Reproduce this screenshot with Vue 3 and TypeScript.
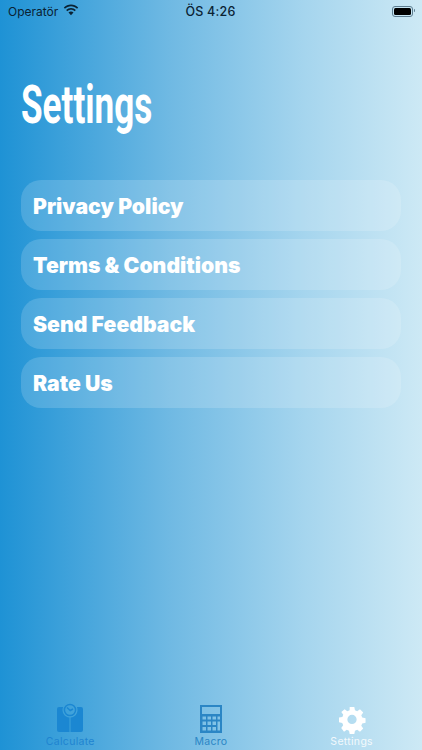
<script setup lang="ts">
const items: string[] = ['Privacy Policy', 'Terms & Conditions', 'Send Feedback', 'Rate Us']
</script>

<template>
  <div class="page">
    <header class="status">
      <div class="status-left">
        <span>Operatör</span>
        <svg class="wifi" viewBox="0 0 18 13" width="16" height="12">
          <path fill="#0a2233" d="M9 2.400c2.600 0 5 1 6.800 2.700l1.300-1.400C14.900 1.600 12.100.4 9 .4S3.100 1.600.9 3.700l1.300 1.400C4 3.400 6.400 2.400 9 2.400z" />
          <path fill="#0a2233" d="M9 6.300c1.600 0 3 .6 4.100 1.600l1.400-1.400C13 5.100 11.100 4.300 9 4.300s-4 .8-5.500 2.200l1.400 1.400C6 6.900 7.400 6.300 9 6.300z" />
          <path fill="#0a2233" d="M9 8.200c-1.100 0-2 .4-2.800 1.100L9 12.300l2.800-3C11 8.600 10.100 8.200 9 8.200z" />
        </svg>
      </div>
      <span class="time">ÖS 4:26</span>
      <div class="battery"><span class="battery-fill"></span></div>
    </header>

    <h1 class="title">Settings</h1>

    <ul class="list">
      <li v-for="item in items" :key="item" class="row">{{ item }}</li>
    </ul>

    <nav class="tabs">
      <div class="tab tab-calc">
        <svg class="tab-icon" viewBox="0 0 28 28" width="28" height="28">
          <path fill="#1b87d2" d="M14.500 12.480A7.500 7.500 0 0 0 20.900 2H25a2 2 0 0 1 2 2v21a2 2 0 0 1-2 2H14.500z" />
          <path fill="#1b87d2" d="M13.500 12.480A7.500 7.500 0 0 1 7.100 2H3a2 2 0 0 0-2 2v21a2 2 0 0 0 2 2h10.500z" />
          <circle cx="14" cy="5" r="5.600" fill="none" stroke="#1b87d2" stroke-width="1.500" />
          <path d="M11 2.500 14.200 5.500 17 4" fill="none" stroke="#1b87d2" stroke-width="1.500" />
        </svg>
        <span>Calculate</span>
      </div>
      <div class="tab tab-macro">
        <svg class="tab-icon" viewBox="0 0 22 28" width="22" height="28">
          <path fill="#2b86c5" fill-rule="evenodd" d="M0 0h22v28H0zM2 2v7h18V2zM2.500 11.500v3h3.500v-3zM7.500 11.500v3H11v-3zM12.500 11.500v3H16v-3zM17.500 16.500v9H20v-9zM2.500 16.500v3.500h3.500v-3.500zM7.500 16.500v3.500H11v-3.500zM12.500 16.500v3.500H16v-3.500zM2.500 22v3.500h3.500V22zM7.500 22v3.500H11V22zM12.500 22v3.500H16V22zM17.500 11.500v3H20v-3z" />
        </svg>
        <span>Macro</span>
      </div>
      <div class="tab tab-settings">
        <svg class="tab-icon" viewBox="0 0 28 28" width="26" height="28">
          <path fill="#fff" fill-rule="evenodd" d="M11.500 1h5l.7 3.600 2.400 1 3-2.100 3.500 3.500-2.100 3 1 2.400 3.600.7v5l-3.600.7-1 2.400 2.100 3-3.500 3.500-3-2.100-2.400 1-.7 3.600h-5l-.7-3.600-2.400-1-3 2.100L2.400 23.700l2.100-3-1-2.400L0 17.500v-5l3.600-.7 1-2.400-2.100-3L6 3.500l3 2.100 2.400-1zM14 9.500a5 5 0 1 0 0 10 5 5 0 0 0 0-10z" />
        </svg>
        <span>Settings</span>
      </div>
    </nav>
  </div>
</template>

<style>
html, body { margin: 0; padding: 0; }
</style>

<style scoped>
.page {
  width: 422px;
  height: 750px;
  overflow: hidden;
  display: flex;
  flex-direction: column;
  background: linear-gradient(90deg, #1e92d5 0%, #6fb9e3 40%, #a5d5ee 72%, #cde9f5 100%);
  font-family: Inter, "Liberation Sans", sans-serif;
}
.status {
  height: 22px;
  padding: 0 9px 0 8px;
  display: grid;
  grid-template-columns: 1fr auto 1fr;
  align-items: center;
  color: #0a2233;
  font-size: 12px;
}
.status-left { display: flex; align-items: center; gap: 5px; }
.wifi { margin-top: -3px; }
.time { font-weight: 500; font-size: 12.500px; letter-spacing: 0.2px; }
.battery {
  position: relative;
  justify-self: end;
  width: 17px;
  height: 7px;
  border: 1px solid #5d7d90;
  border-radius: 3px;
  padding: 1px;
  box-sizing: content-box;
  display: flex;
}
.battery::after {
  content: "";
  position: absolute;
  right: -3px;
  top: 2px;
  width: 1.500px;
  height: 3px;
  background: #5d7d90;
  border-radius: 0 1px 1px 0;
}
.battery-fill { flex: 1; background: #000; border-radius: 1.500px; }
.title {
  margin: 51px 0 0 21px;
  height: 64px;
  font-family: Roboto, "Liberation Sans", sans-serif;
  font-weight: 700;
  font-size: 54px;
  line-height: 64px;
  color: #fff;
  transform: scaleX(0.65);
  transform-origin: left center;
  white-space: nowrap;
}
.list {
  list-style: none;
  margin: 43px 21px 0;
  padding: 0;
  display: flex;
  flex-direction: column;
  gap: 8px;
}
.row {
  height: 50px;
  padding: 1px 0 0 12px;
  display: flex;
  align-items: center;
  border-radius: 20px;
  background: rgba(255, 255, 255, 0.16);
  color: #fff;
  font-weight: 900;
  font-size: 21.200px;
}
.tabs {
  margin-top: auto;
  height: 45px;
  display: grid;
  grid-template-columns: repeat(3, 1fr);
}
.tab {
  display: flex;
  flex-direction: column;
  align-items: center;
  gap: 2px;
  font-size: 10.500px;
  line-height: 14px;
  letter-spacing: 0.3px;
  font-weight: 400;
}
.tab-icon { display: block; flex: none; overflow: visible; }
.tab-calc { color: #1f84d0; }
.tab-macro { color: #2b86c5; }
.tab-settings { color: rgba(255, 255, 255, 0.85); }
</style>
